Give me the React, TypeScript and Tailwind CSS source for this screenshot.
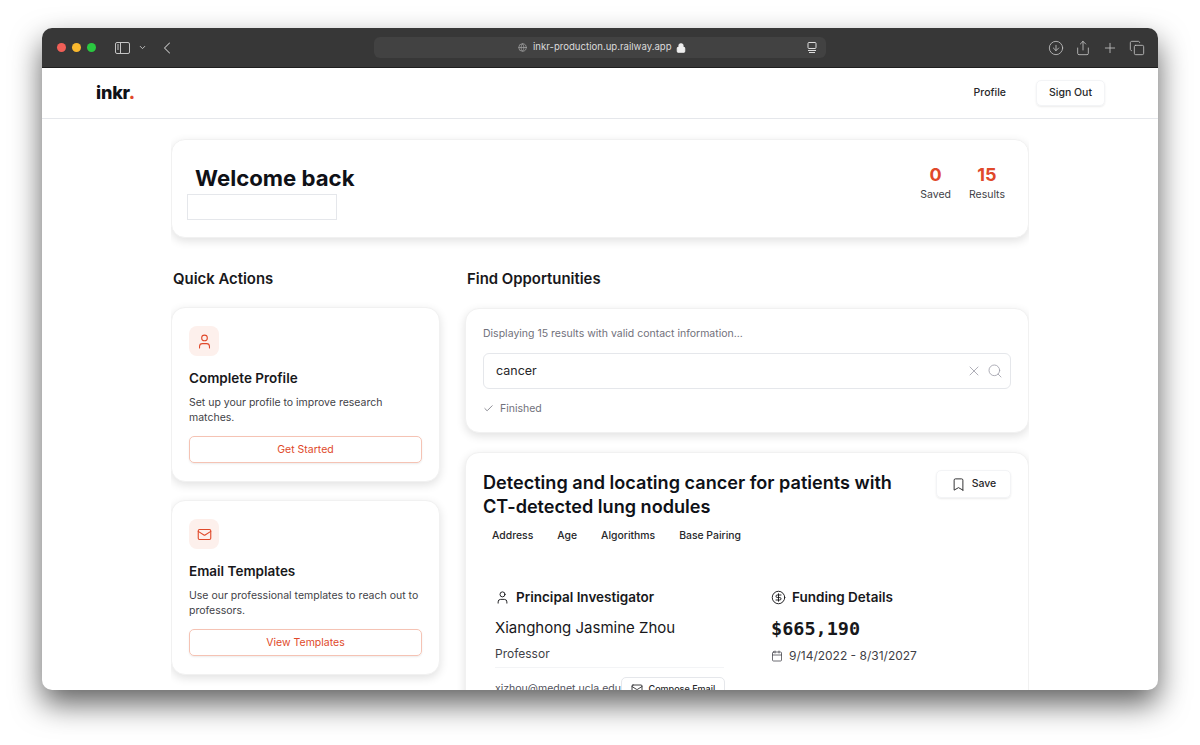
import { Bookmark, Calendar, Check, ChevronDown, ChevronLeft, CircleArrowDown, CircleDollarSign, Copy, Globe, Lock, Mail, Plus, Search, Share, User, X } from "lucide-react";

const tags = ["Address", "Age", "Algorithms", "Base Pairing"];

function ActionCard({ icon, title, text, action }: { icon: React.ReactNode; title: string; text: string; action: string }) {
  return (
    <div className="rounded-[14px] border border-[#f1f1f1] bg-white px-[17px] pt-[18px] pb-[18px] shadow-[0_3px_10px_rgba(0,0,0,0.12)]">
      <div className="flex h-[30px] w-[30px] items-center justify-center rounded-lg bg-[#fdf0ec] text-[#e0492a]">{icon}</div>
      <h3 className="mt-[11px] text-[13.5px] leading-[22px] font-semibold text-zinc-900">{title}</h3>
      <p className="mt-[6px] text-[10.5px] leading-[15px] text-zinc-700">{text}</p>
      <button className="mt-[11px] h-[27px] w-full rounded-[5px] border border-[#f5c3b4] text-[10.5px] text-[#e0492a] shadow-[0_1px_2px_rgba(0,0,0,0.08)]">
        {action}
      </button>
    </div>
  );
}

export default function App() {
  return (
    <div className="h-[745px] w-[1200px] overflow-hidden bg-white px-[42px] pt-[28px] font-['Inter',sans-serif]">
      <div className="flex h-[662px] flex-col overflow-hidden rounded-[10px] bg-white shadow-[0_14px_30px_rgba(0,0,0,0.62)]">
        {/* browser chrome */}
        <div className="flex h-[40px] shrink-0 items-center border-b border-[#1f1f1f] bg-[#373737] pr-[13px] pl-[15px] text-[#c4c4c4]">
          <div className="flex gap-[6px]">
            <span className="h-[9px] w-[9px] rounded-full bg-[#f15f57]" />
            <span className="h-[9px] w-[9px] rounded-full bg-[#f9b82e]" />
            <span className="h-[9px] w-[9px] rounded-full bg-[#2ac840]" />
          </div>
          <svg className="ml-[19px]" width="15" height="12" viewBox="0 0 15 12" fill="none" stroke="currentColor" strokeWidth="1">
            <rect x="0.5" y="0.5" width="14" height="11" rx="1.5" />
            <path d="M5.5 0.5v11M2 3h2M2 5h2M2 7h2" />
          </svg>
          <ChevronDown className="ml-[8px]" size={9} strokeWidth={2.5} />
          <ChevronLeft className="ml-[10px]" size={20} strokeWidth={1.25} />
          <div className="ml-[197px] flex h-[21px] w-[452px] items-center rounded-md bg-[#424242] pr-[9px] pl-[144px] text-[9.6px] text-[#dcdcdc]">
            <Globe size={9} className="text-[#a0a0a0]" />
            <span className="ml-[6px]">inkr-production.up.railway.app</span>
            <Lock size={10} strokeWidth={2.5} className="ml-[4px] fill-[#eeeeee] text-[#eeeeee]" />
            <svg className="ml-auto" width="10" height="11" viewBox="0 0 10 11" fill="none" stroke="currentColor" strokeWidth="1">
              <rect x="1" y="0.5" width="8" height="6" rx="1" />
              <path d="M1 8.5h8M2 10.5h6" />
            </svg>
          </div>
          <div className="ml-auto flex items-center gap-[11px]">
            <CircleArrowDown size={16} strokeWidth={1.25} />
            <Share size={16} strokeWidth={1.25} />
            <Plus size={16} strokeWidth={1.25} />
            <Copy size={16} strokeWidth={1.25} />
          </div>
        </div>

        {/* nav */}
        <div className="flex h-[51px] shrink-0 items-center justify-between border-b border-gray-200 pr-[53px] pl-[54px]">
          <div className="-mt-[2px] text-[18px] font-extrabold tracking-[-0.2px] text-[#0f1117]">
            inkr<span className="text-[#e0492a]">.</span>
          </div>
          <div className="flex items-center gap-[30px] text-[10.5px] font-medium text-zinc-800">
            <span>Profile</span>
            <button className="h-[26px] w-[69px] rounded-[5px] border border-gray-100 shadow-[0_1px_2px_rgba(0,0,0,0.08)]">Sign Out</button>
          </div>
        </div>

        {/* page */}
        <div className="mx-auto w-[858px] flex-1 overflow-hidden pt-[20px]">
          <div className="flex h-[99px] items-start justify-between rounded-[14px] border border-[#f1f1f1] bg-white pt-[23px] pr-[23px] pl-[15px] shadow-[0_3px_10px_rgba(0,0,0,0.12)]">
            <div>
              <h1 className="pl-[8px] text-[22.2px] leading-[30px] font-bold text-[#0f1117]">Welcome back</h1>
              <div className="mt-[1px] h-[26px] w-[150px] border border-gray-200" />
            </div>
            <div className="flex gap-[18px] text-center">
              <div>
                <div className="mt-[1px] text-[18px] leading-[22px] font-bold text-[#e0492a]">0</div>
                <div className="mt-[1px] text-[10.5px] leading-[16px] text-zinc-700">Saved</div>
              </div>
              <div>
                <div className="mt-[1px] text-[18px] leading-[22px] font-bold text-[#e0492a]">15</div>
                <div className="mt-[1px] text-[10.5px] leading-[16px] text-zinc-700">Results</div>
              </div>
            </div>
          </div>

          <div className="mt-[30px] flex gap-[25px]">
            <div className="w-[269px] shrink-0">
              <h2 className="pl-[2px] text-[14.9px] leading-[22px] font-semibold text-zinc-900">Quick Actions</h2>
              <div className="mt-[17px] flex flex-col gap-[18px]">
                <ActionCard icon={<User size={17} strokeWidth={1.5} />} title="Complete Profile" text="Set up your profile to improve research matches." action="Get Started" />
                <ActionCard icon={<Mail size={15} strokeWidth={1.75} />} title="Email Templates" text="Use our professional templates to reach out to professors." action="View Templates" />
              </div>
            </div>

            <div className="flex-1">
              <h2 className="pl-[2px] text-[14.9px] leading-[22px] font-semibold text-zinc-900">Find Opportunities</h2>
              <div className="mt-[18px] h-[125px] rounded-[14px] border border-[#f1f1f1] bg-white px-[17px] pt-[17px] shadow-[0_3px_10px_rgba(0,0,0,0.12)]">
                <p className="text-[10.5px] leading-[15px] text-zinc-500">Displaying 15 results with valid contact information...</p>
                <div className="mt-[12px] flex h-[36px] items-center rounded-[6px] border border-gray-200 pr-[7px] pl-[12px] text-zinc-400">
                  <span className="text-[12.5px] text-zinc-800">cancer</span>
                  <X className="ml-auto" size={16} strokeWidth={1.25} />
                  <Search className="ml-[5px]" size={16} strokeWidth={1.25} />
                </div>
                <div className="mt-[12px] flex items-center gap-[6px] text-[10.5px] text-zinc-500">
                  <Check size={11} strokeWidth={1.75} />
                  <span>Finished</span>
                </div>
              </div>

              <div className="mt-[19px] rounded-[14px] border border-[#f1f1f1] bg-white px-[17px] pt-[17px] pb-[20px] shadow-[0_3px_10px_rgba(0,0,0,0.12)]">
                <div className="flex items-start justify-between">
                  <h3 className="w-[430px] text-[18.1px] leading-[24px] font-semibold text-[#0f1117]">Detecting and locating cancer for patients with CT-detected lung nodules</h3>
                  <button className="flex h-[28px] w-[75px] items-center justify-center gap-[6px] rounded-[5px] border border-gray-100 text-[10.5px] font-medium text-zinc-800 shadow-[0_1px_2px_rgba(0,0,0,0.08)]">
                    <Bookmark size={15} strokeWidth={1.5} />
                    Save
                  </button>
                </div>
                <div className="mt-[10px] flex gap-[24px] pl-[9px] text-[10.4px] leading-[16px] font-medium text-zinc-800">
                  {tags.map((tag) => (
                    <span key={tag}>{tag}</span>
                  ))}
                </div>

                <div className="mt-[44px] flex pl-[12px]">
                  <div className="w-[229px]">
                    <div className="flex items-center gap-[6px] text-[13.5px] leading-[18px] font-semibold text-zinc-900">
                      <User size={15} strokeWidth={1.5} />
                      Principal Investigator
                    </div>
                    <div className="mt-[12px] text-[15px] leading-[20px] text-zinc-900">Xianghong Jasmine Zhou</div>
                    <div className="mt-[8px] text-[12px] leading-[16px] text-zinc-700">Professor</div>
                    <div className="mt-[5px] flex items-center justify-between border-t border-gray-100 pt-[9px] text-[10.5px] text-zinc-600">
                      <span className="whitespace-nowrap">xjzhou@mednet.ucla.edu</span>
                      <button className="flex h-[24px] w-[104px] shrink-0 items-center justify-center gap-[6px] rounded-[5px] border border-gray-200 text-[9px] font-medium text-zinc-800">
                        <Mail size={12} strokeWidth={1.75} />
                        Compose Email
                      </button>
                    </div>
                  </div>
                  <div className="ml-[47px]">
                    <div className="flex items-center gap-[6px] text-[13.5px] leading-[18px] font-semibold text-zinc-900">
                      <CircleDollarSign size={15} strokeWidth={1.5} />
                      Funding Details
                    </div>
                    <div className="mt-[12px] font-['DejaVu_Sans_Mono',monospace] text-[18.5px] leading-[22px] font-bold text-zinc-900">$665,190</div>
                    <div className="mt-[8px] flex items-center gap-[6px] text-[12px] leading-[16px] text-zinc-700">
                      <Calendar size={12} strokeWidth={1.5} />
                      9/14/2022 - 8/31/2027
                    </div>
                  </div>
                </div>
              </div>
            </div>
          </div>
        </div>
      </div>
    </div>
  );
}
